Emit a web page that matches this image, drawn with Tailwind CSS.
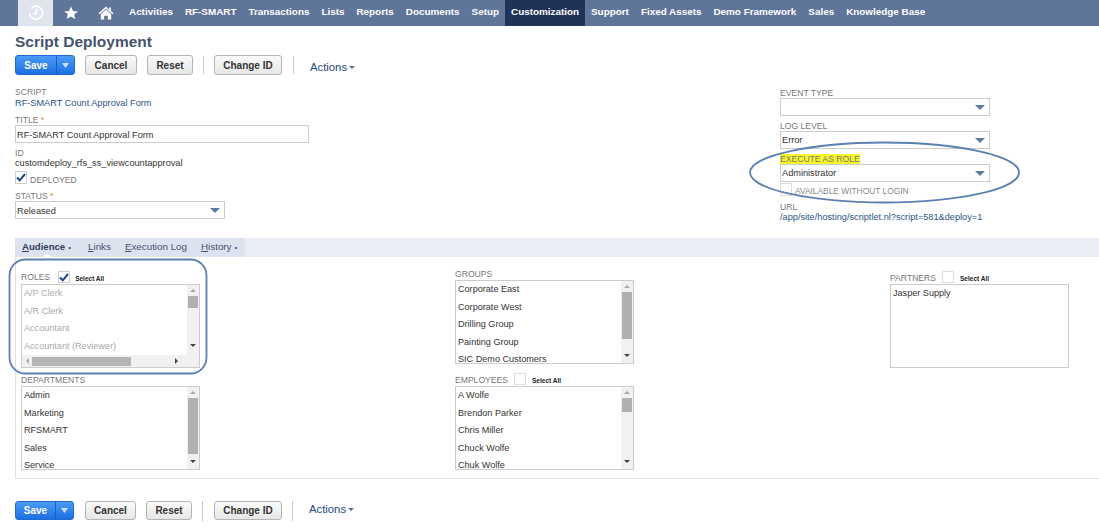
<!DOCTYPE html>
<html lang="en">
<head>
    <meta charset="UTF-8" />
    <title>Script Deployment</title>
    <script src="https://cdn.jsdelivr.net/npm/@tailwindcss/browser@4"></script>
</head>
<body class="relative w-[1099px] h-[528px] overflow-hidden bg-white font-['Liberation_Sans',Arial,sans-serif] text-[#333]">

<!-- Top nav -->
<nav class="flex items-stretch h-[26px] pl-[18px] bg-[#5f7599] text-white text-[9.9px] font-bold">
    <div class="flex items-center justify-center w-[35px] bg-[#dfe5ee]">
        <svg width="16" height="16" viewBox="0 0 16 16" fill="none" stroke="#fff" stroke-width="1.6"><path d="M3 3.5A6.5 6.5 0 1 1 1.5 8" /><path d="M8.5 4v4.5H5.5" /></svg>
    </div>
    <div class="flex items-center justify-center w-[36px]">
        <svg width="14" height="14" viewBox="0 0 14 14" fill="#fff"><path d="M7 .5l2 4.4 4.8.5-3.6 3.2 1 4.7L7 10.4 2.8 12.800l1-4.700L.2 5.400 5 4.900z" /></svg>
    </div>
    <div class="flex items-center justify-center w-[34px]">
        <svg width="16" height="14" viewBox="0 0 16 14" fill="#fff"><path d="M8 .5L.5 7.300l1 .9L8 2.400l6.500 5.800 1-.9-2.500-2.300V1.500h-1.800v2.200z" /><path d="M2.800 8.200L8 3.600l5.200 4.600v5.300H9.800V9.800H6.200v3.700H2.800z" /></svg>
    </div>
    <a class="flex items-center px-[6px] pb-[2px]">Activities</a>
    <a class="flex items-center px-[6px] pb-[2px]">RF-SMART</a>
    <a class="flex items-center px-[6px] pb-[2px]">Transactions</a>
    <a class="flex items-center px-[6px] pb-[2px]">Lists</a>
    <a class="flex items-center px-[6px] pb-[2px]">Reports</a>
    <a class="flex items-center px-[6px] pb-[2px]">Documents</a>
    <a class="flex items-center px-[6px] pb-[2px]">Setup</a>
    <a class="flex items-center px-[6px] pb-[2px] bg-[#1f3358]">Customization</a>
    <a class="flex items-center px-[6px] pb-[2px]">Support</a>
    <a class="flex items-center px-[6px] pb-[2px]">Fixed Assets</a>
    <a class="flex items-center px-[6px] pb-[2px]">Demo Framework</a>
    <a class="flex items-center px-[6px] pb-[2px]">Sales</a>
    <a class="flex items-center px-[6px] pb-[2px]">Knowledge Base</a>
</nav>

<main class="pl-[15px]">
    <h1 class="mt-[6px] h-[19px] leading-[19px] text-[15.5px] font-bold text-[#44546f]">Script Deployment</h1>

    <!-- Top buttons -->
    <div class="flex items-center mt-[4px] h-[20px] text-[10px] font-bold">
        <div class="flex h-[20px] w-[60px] rounded-[3px] border border-[#1f6bd0] bg-gradient-to-b from-[#4a9bf5] to-[#1b6fe3] text-white">
            <span class="flex items-center justify-center w-[41px] border-r border-[#1a5fbc]">Save</span>
            <span class="flex items-center justify-center flex-1"><svg width="7" height="5" viewBox="0 0 7 5" fill="#cfe0f7"><path d="M0 0h7L3.500 5z" /></svg></span>
        </div>
        <button class="ml-[10px] w-[52px] h-[20px] rounded-[3px] border border-[#b5b5b5] bg-gradient-to-b from-[#fafafa] to-[#e6e6e6]">Cancel</button>
        <button class="ml-[10px] w-[46px] h-[20px] rounded-[3px] border border-[#b5b5b5] bg-gradient-to-b from-[#fafafa] to-[#e6e6e6]">Reset</button>
        <span class="ml-[10px] w-px h-[18px] bg-[#c8c8c8]"></span>
        <button class="ml-[10px] w-[68px] h-[20px] rounded-[3px] border border-[#b5b5b5] bg-gradient-to-b from-[#fafafa] to-[#e6e6e6]">Change ID</button>
        <span class="ml-[11px] w-px h-[18px] bg-[#c8c8c8]"></span>
        <a class="flex items-center ml-[16px] pt-[4px] text-[11.3px] font-normal text-[#24477c]">Actions<svg class="ml-[2px]" width="6" height="3" viewBox="0 0 6 3" fill="#5c6f8c"><path d="M0 0h6L3 3z" /></svg></a>
    </div>

    <!-- Primary fields -->
    <div class="flex mt-[12px]">
        <div class="w-[765px] text-[9.2px]">
            <div class="h-[11px] leading-[11px] text-[8.6px] uppercase text-[#777]">Script</div>
            <div class="h-[11px] leading-[11px] text-[#2c5487]">RF-SMART Count Approval Form</div>
            <div class="mt-[6px] h-[10px] leading-[10px] text-[8.6px] uppercase text-[#777]">Title <span class="text-[#e08a2c]">*</span></div>
            <div class="w-[294px] h-[18px] leading-[18px] px-[1px] border border-[#ccc]">RF-SMART Count Approval Form</div>
            <div class="mt-[5px] h-[10px] leading-[10px] text-[8.6px] uppercase text-[#777]">ID</div>
            <div class="h-[11px] leading-[11px]">customdeploy_rfs_ss_viewcountapproval</div>
            <div class="flex items-center mt-[1px] h-[14px]">
                <span class="flex items-center justify-center w-[12px] h-[13px] border border-[#ccc]">
                    <svg width="10" height="9" viewBox="0 0 10 9" fill="none" stroke="#1f4788" stroke-width="2"><path d="M1 4.500l2.800 2.800L9 1" /></svg>
                </span>
                <span class="ml-[3px] mt-[6px] text-[8.6px] text-[#777]">DEPLOYED</span>
            </div>
            <div class="mt-[7px] h-[10px] leading-[10px] text-[8.6px] uppercase text-[#777]">Status <span class="text-[#e08a2c]">*</span></div>
            <div class="flex items-center justify-between w-[210px] h-[18px] px-[1px] border border-[#ccc]">
                <span class="pt-[3px]">Released</span>
                <svg class="mr-[3px]" width="10" height="5" viewBox="0 0 10 5" fill="#5c7aa3"><path d="M0 0h10L5 5z" /></svg>
            </div>
        </div>

        <div class="w-[210px] pt-[1px] text-[9.2px]">
            <div class="h-[10px] leading-[10px] text-[8.6px] uppercase text-[#777]">Event Type</div>
            <div class="flex items-center justify-between h-[18px] px-[1px] border border-[#ccc]">
                <span></span>
                <svg class="mr-[3px]" width="10" height="5" viewBox="0 0 10 5" fill="#5c7aa3"><path d="M0 0h10L5 5z" /></svg>
            </div>
            <div class="mt-[5px] h-[10px] leading-[10px] text-[8.6px] uppercase text-[#777]">Log Level</div>
            <div class="flex items-center justify-between h-[18px] px-[1px] border border-[#ccc]">
                <span class="pt-[2px]">Error</span>
                <svg class="mr-[3px]" width="10" height="5" viewBox="0 0 10 5" fill="#5c7aa3"><path d="M0 0h10L5 5z" /></svg>
            </div>
            <div class="mt-[5px] h-[10px] leading-[10px] text-[8.6px] uppercase text-[#777]"><span class="bg-[#f6f628]">Execute as Role</span></div>
            <div class="flex items-center justify-between h-[18px] px-[1px] border border-[#ccc]">
                <span class="pt-[2px]">Administrator</span>
                <svg class="mr-[3px]" width="10" height="5" viewBox="0 0 10 5" fill="#5c7aa3"><path d="M0 0h10L5 5z" /></svg>
            </div>
            <div class="flex items-center mt-[1px] h-[13px]">
                <span class="w-[12px] h-[13px] border border-[#ddd]"></span>
                <span class="ml-[3px] mt-[4px] text-[8.4px] text-[#888]">AVAILABLE WITHOUT LOGIN</span>
            </div>
            <div class="mt-[6px] h-[10px] leading-[10px] text-[8.6px] uppercase text-[#777]">URL</div>
            <div class="h-[11px] leading-[11px] whitespace-nowrap text-[#2c5487]">/app/site/hosting/scriptlet.nl?script=581&amp;deploy=1</div>
        </div>
    </div>

    <!-- Subtabs -->
    <div class="flex items-stretch mt-[15px] h-[19px] bg-[#e9edf4] text-[9.8px] text-[#44546f]">
        <div class="relative flex items-center w-[230px] pl-[7px] bg-[#dde3ee]">
            <span class="font-bold text-[9.6px] text-[#2f3f5c]"><u>A</u>udience</span><span class="ml-[3px] text-[8px]">•</span>
            <span class="ml-[17px]"><u>L</u>inks</span>
            <span class="ml-[14px]"><u>E</u>xecution Log</span>
            <span class="ml-[14px]"><u>H</u>istory</span><span class="ml-[3px] text-[8px]">•</span>
            <span class="absolute left-[27px] bottom-0 border-x-[5px] border-b-[3px] border-x-transparent border-b-white"></span>
        </div>
    </div>

    <div class="grid grid-cols-[434px_435px_1fr] h-[222px] pl-[5px] border-l border-b border-[#e0e0e0] text-[9.1px]">
        <!-- Roles / departments -->
        <div class="pt-[13px]">
            <div class="flex items-center h-[14px]">
                <span class="mt-[1px] text-[8.6px] text-[#777]">ROLES</span>
                <span class="flex items-center justify-center ml-[8px] w-[12px] h-[12px] border border-[#ccc]">
                    <svg width="10" height="9" viewBox="0 0 10 9" fill="none" stroke="#1f4788" stroke-width="2"><path d="M1 4.500l2.800 2.800L9 1" /></svg>
                </span>
                <span class="ml-[5px] mt-[3px] text-[6.5px] font-bold text-[#222]">Select All</span>
            </div>
            <div class="flex w-[179px] h-[84px] border border-[#ccc] overflow-hidden">
                <div class="flex-1 flex flex-col min-w-0">
                    <div class="flex-1 overflow-hidden pl-[2px] text-[#aaa]">
                        <div class="h-[17.500px] leading-[17.500px]">A/P Clerk</div>
                        <div class="h-[17.500px] leading-[17.500px]">A/R Clerk</div>
                        <div class="h-[17.500px] leading-[17.500px]">Accountant</div>
                        <div class="h-[17.500px] leading-[17.500px]">Accountant (Reviewer)</div>
                    </div>
                    <div class="flex items-center h-[12px] bg-[#f1f1f1]">
                        <svg class="ml-[4px]" width="3" height="6" viewBox="0 0 3 6" fill="#aaa"><path d="M3 0v6L0 3z" /></svg>
                        <span class="ml-[3px] w-[99px] h-[9px] bg-[#b5b5b5]"></span>
                        <svg class="ml-[44px]" width="3" height="6" viewBox="0 0 3 6" fill="#444"><path d="M0 0v6l3-3z" /></svg>
                    </div>
                </div>
                <div class="flex flex-col items-center w-[12px] bg-[#f1f1f1] pt-[4px]">
                    <svg width="6" height="3" viewBox="0 0 6 3" fill="#aaa"><path d="M0 3h6L3 0z" /></svg>
                    <span class="mt-[4px] w-[10px] h-[12px] bg-[#b0b0b0]"></span>
                    <svg class="mt-[36px]" width="6" height="3" viewBox="0 0 6 3" fill="#444"><path d="M0 0h6L3 3z" /></svg>
                </div>
            </div>
            <div class="mt-[7px] h-[11px] leading-[11px] text-[8.6px] text-[#777]">DEPARTMENTS</div>
            <div class="flex w-[179px] h-[84px] border border-[#ccc] overflow-hidden">
                <div class="flex-1 overflow-hidden pl-[2px]">
                    <div class="h-[17.500px] leading-[17.500px]">Admin</div>
                    <div class="h-[17.500px] leading-[17.500px]">Marketing</div>
                    <div class="h-[17.500px] leading-[17.500px]">RFSMART</div>
                    <div class="h-[17.500px] leading-[17.500px]">Sales</div>
                    <div class="h-[17.500px] leading-[17.500px]">Service</div>
                </div>
                <div class="flex flex-col items-center w-[12px] bg-[#f1f1f1] pt-[4px]">
                    <svg width="6" height="3" viewBox="0 0 6 3" fill="#aaa"><path d="M0 3h6L3 0z" /></svg>
                    <span class="mt-[4px] w-[10px] h-[56px] bg-[#b0b0b0]"></span>
                    <svg class="mt-[6px]" width="6" height="3" viewBox="0 0 6 3" fill="#444"><path d="M0 0h6L3 3z" /></svg>
                </div>
            </div>
        </div>

        <!-- Groups / employees -->
        <div class="pt-[12px]">
            <div class="h-[11px] leading-[11px] text-[8.6px] text-[#777]">GROUPS</div>
            <div class="flex w-[179px] h-[84px] border border-[#ccc] overflow-hidden">
                <div class="flex-1 overflow-hidden pl-[2px]">
                    <div class="h-[17.500px] leading-[17.500px]">Corporate East</div>
                    <div class="h-[17.500px] leading-[17.500px]">Corporate West</div>
                    <div class="h-[17.500px] leading-[17.500px]">Drilling Group</div>
                    <div class="h-[17.500px] leading-[17.500px]">Painting Group</div>
                    <div class="h-[17.500px] leading-[17.500px]">SIC Demo Customers</div>
                </div>
                <div class="flex flex-col items-center w-[12px] bg-[#f1f1f1] pt-[4px]">
                    <svg width="6" height="3" viewBox="0 0 6 3" fill="#aaa"><path d="M0 3h6L3 0z" /></svg>
                    <span class="mt-[4px] w-[10px] h-[47px] bg-[#b0b0b0]"></span>
                    <svg class="mt-[15px]" width="6" height="3" viewBox="0 0 6 3" fill="#444"><path d="M0 0h6L3 3z" /></svg>
                </div>
            </div>
            <div class="flex items-center mt-[7px] h-[15px]">
                <span class="mt-[3px] text-[8.6px] text-[#777]">EMPLOYEES</span>
                <span class="ml-[6px] w-[12px] h-[12px] border border-[#ddd]"></span>
                <span class="ml-[6px] mt-[4px] text-[6.5px] font-bold text-[#222]">Select All</span>
            </div>
            <div class="flex w-[179px] h-[84px] border border-[#ccc] overflow-hidden">
                <div class="flex-1 overflow-hidden pl-[2px]">
                    <div class="h-[17.500px] leading-[17.500px]">A Wolfe</div>
                    <div class="h-[17.500px] leading-[17.500px]">Brendon Parker</div>
                    <div class="h-[17.500px] leading-[17.500px]">Chris Miller</div>
                    <div class="h-[17.500px] leading-[17.500px]">Chuck Wolfe</div>
                    <div class="h-[17.500px] leading-[17.500px]">Chuk Wolfe</div>
                </div>
                <div class="flex flex-col items-center w-[12px] bg-[#f1f1f1] pt-[4px]">
                    <svg width="6" height="3" viewBox="0 0 6 3" fill="#aaa"><path d="M0 3h6L3 0z" /></svg>
                    <span class="mt-[4px] w-[10px] h-[14px] bg-[#b0b0b0]"></span>
                    <svg class="mt-[48px]" width="6" height="3" viewBox="0 0 6 3" fill="#444"><path d="M0 0h6L3 3z" /></svg>
                </div>
            </div>
        </div>

        <!-- Partners -->
        <div class="pt-[13px]">
            <div class="flex items-center h-[14px]">
                <span class="mt-[2px] text-[8.6px] text-[#777]">PARTNERS</span>
                <span class="ml-[6px] w-[12px] h-[12px] border border-[#ddd]"></span>
                <span class="ml-[6px] mt-[3px] text-[6.5px] font-bold text-[#222]">Select All</span>
            </div>
            <div class="w-[179px] h-[84px] pl-[2px] border border-[#ccc] leading-[17.500px]">Jasper Supply</div>
        </div>
    </div>

    <!-- Bottom buttons -->
    <div class="flex items-center mt-[22px] h-[19px] text-[10px] font-bold">
        <div class="flex h-[19px] w-[59px] rounded-[3px] border border-[#1f6bd0] bg-gradient-to-b from-[#4a9bf5] to-[#1b6fe3] text-white">
            <span class="flex items-center justify-center w-[40px] border-r border-[#1a5fbc]">Save</span>
            <span class="flex items-center justify-center flex-1"><svg width="7" height="5" viewBox="0 0 7 5" fill="#cfe0f7"><path d="M0 0h7L3.500 5z" /></svg></span>
        </div>
        <button class="ml-[11px] w-[51px] h-[19px] rounded-[3px] border border-[#b5b5b5] bg-gradient-to-b from-[#fafafa] to-[#e6e6e6]">Cancel</button>
        <button class="ml-[10px] w-[46px] h-[19px] rounded-[3px] border border-[#b5b5b5] bg-gradient-to-b from-[#fafafa] to-[#e6e6e6]">Reset</button>
        <span class="ml-[10px] w-px h-[20px] bg-[#c8c8c8]"></span>
        <button class="ml-[11px] w-[68px] h-[19px] rounded-[3px] border border-[#b5b5b5] bg-gradient-to-b from-[#fafafa] to-[#e6e6e6]">Change ID</button>
        <span class="ml-[10px] w-px h-[20px] bg-[#c8c8c8]"></span>
        <a class="flex items-center ml-[16px] pb-[2px] text-[11.3px] font-normal text-[#24477c]">Actions<svg class="ml-[2px]" width="6" height="3" viewBox="0 0 6 3" fill="#5c6f8c"><path d="M0 0h6L3 3z" /></svg></a>
    </div>
</main>

<!-- Hand-drawn annotations on top of the screenshot -->
<svg class="absolute left-0 top-0 pointer-events-none" width="1099" height="528" fill="none" stroke="#5b80b2" stroke-width="1.800">
    <rect x="9.500" y="259.500" width="197" height="114" rx="16" />
    <ellipse cx="884.500" cy="172.500" rx="134.500" ry="30" />
</svg>

</body>
</html>
